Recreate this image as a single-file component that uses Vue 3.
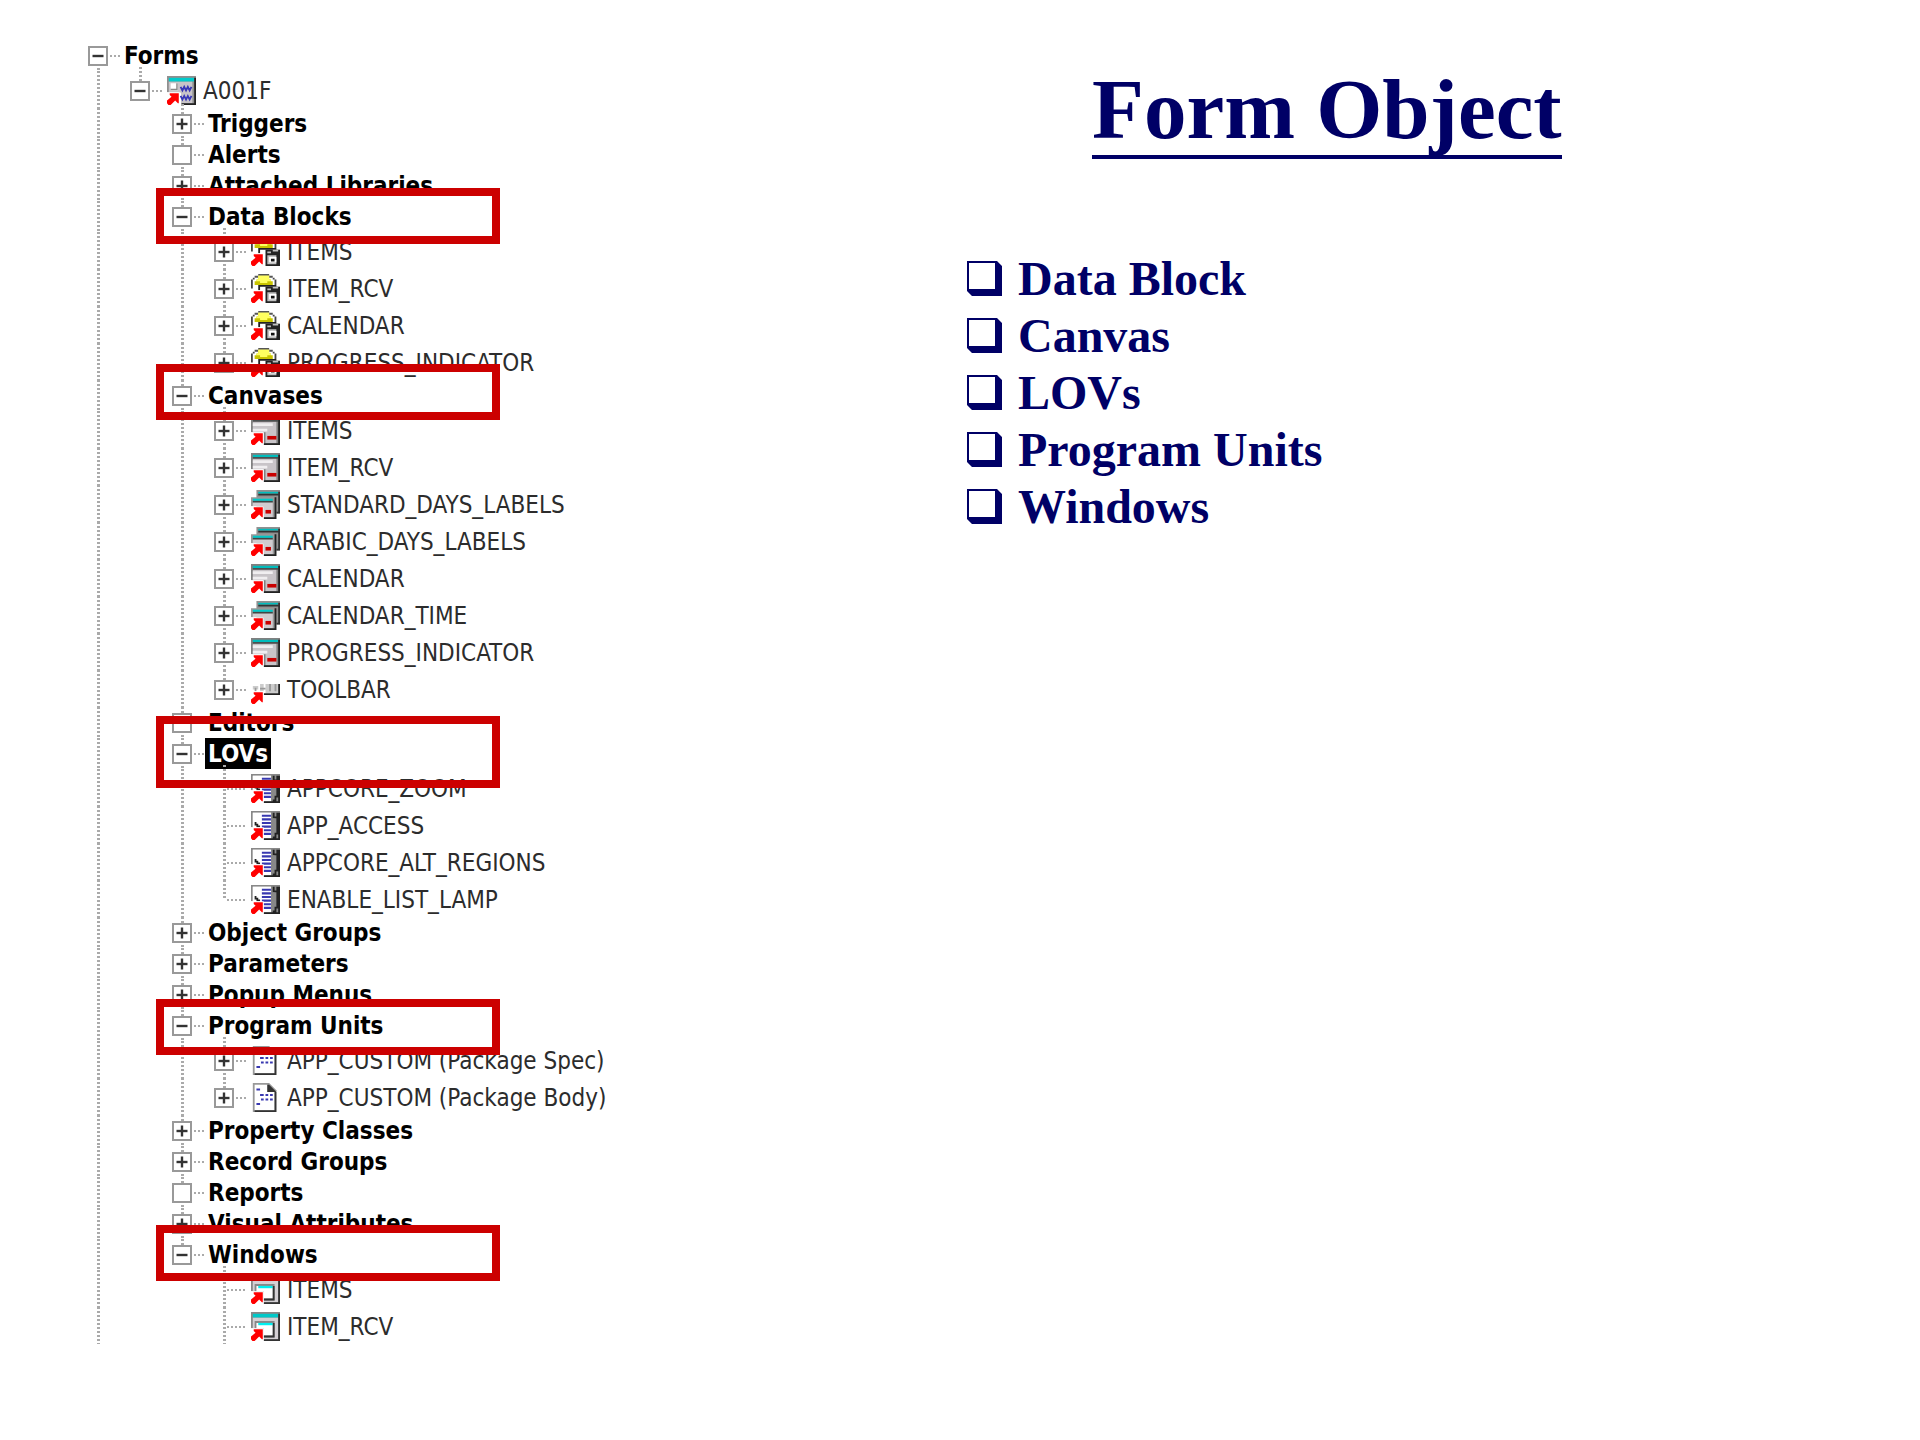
<template>
  <main class="slide">
    <section class="navigator">
      <ul class="tree">
        <li v-for="(row, i) in rows" :key="i" class="row" :class="row.icon ? 'object' : 'group'">
          <span
            v-for="(line, g) in row.guides"
            :key="g"
            class="guide"
            :class="{ line }"
          ></span>
          <span class="branch" :class="row.link">
            <button
              v-if="row.sign === '+' || row.sign === '-'"
              class="toggle"
              type="button"
              :aria-label="row.name"
              :aria-expanded="row.sign === '-'"
            >
              <svg viewBox="0 0 16 16">
                <path d="M2.500 6.800h11v2.400h-11z" />
                <path v-if="row.sign === '+'" d="M6.800 2.500h2.400v11H6.800z" />
              </svg>
            </button>
            <span v-else-if="row.sign === 'o'" class="toggle"></span>
            <span class="dots" :class="{ long: !row.sign }"></span>
          </span>
          <svg v-if="row.icon" class="icon" viewBox="0 0 16 16">
            <template v-if="row.icon === 'form'">
              <path fill="#909090" d="M0 0h16v16H8V9H0z" />
              <path fill="#c8c4c8" d="M1 3h13v12H8V9H1z" />
              <path fill="#00cccc" d="M1 1h14v2H1z" />
              <path fill="#fff" d="M2 4h4v4H2z" />
              <path fill="none" stroke="#888" stroke-width=".8" d="M2 7.500h3.500V4" />
              <path fill="none" stroke="#3838b8" d="M7.500 6l1 2 1-2 1 2 1-2 1 2 1-2M7.500 11l1 2 1-2 1 2 1-2 1 2 1-2" />
              <path fill="#222" d="M15 1h1v15H8v-1h7z" />
            </template>
            <template v-else-if="row.icon === 'block'">
              <path fill="#555" d="M4 0h6v1H4zM2 1h2v1H2zM10 1h2v1h-2z" />
              <path fill="#444" d="M0 3h1v5H0zM1 2h1v1H1zM12 2h1v1h-1zM13 3h1v3h-1z" />
              <path fill="#c8c400" d="M2 4h1V3h1V1h6v2h1v1h1v2H2z" />
              <path fill="#ffff60" d="M4 1h6v2h1v1H9v1H5V4H3V3h1z" />
              <path fill="#222" d="M4 6h10v1H5v2H4z" />
              <path fill="#222" d="M8 7h8v9H8z" />
              <path fill="#c0c0c0" d="M9 8h2v1H9zM12 7h3v1h-3zM9 10h5v5H9z" />
              <path fill="#fff" d="M10 11h4v3h-4z" />
              <path fill="#111" d="M11 12h2v1.500h-2z" />
            </template>
            <template v-else-if="row.icon === 'canvas'">
              <path fill="#808080" d="M0 0h16v16H7V9H0z" />
              <path fill="#c8c4c8" d="M1 3h13v12H8V9H1z" />
              <path fill="#00bcbc" d="M1 1h14v1.300H1z" />
              <path fill="#444" d="M1 2.300h14v.8H1z" />
              <path fill="#f0eef0" d="M1 4h11v1.500H1zM1 7h8v1.500H1z" />
              <path fill="#c80000" d="M9 11h5v2H9z" />
              <path fill="#222" d="M15 1h1v15H7v-1h8z" />
            </template>
            <template v-else-if="row.icon === 'stack'">
              <path fill="#909090" d="M3 0h13v13H3z" />
              <path fill="#00bcbc" d="M4 1h11v1H4z" />
              <path fill="#333" d="M4 2h11v1H4zM15 1h1v12h-2v-1h1z" />
              <path fill="#999" d="M0 4h14v12H7V9H0z" />
              <path fill="#d0ccd0" d="M1 7h11v8H7V9H1z" />
              <path fill="#00c8c8" d="M1 4.800h11V6H1z" />
              <path fill="#444" d="M1 6h11v.8H1z" />
              <path fill="#c80000" d="M8 11h3v2H8z" />
              <path fill="#222" d="M13 4h1v12H7v-1h6z" />
            </template>
            <template v-else-if="row.icon === 'toolbar'">
              <path fill="#ccc" d="M1 6h3v2H1zM5 5h2v4H5zM8 5h7v5H8z" />
              <path fill="#999" d="M2 7h1v2H2zM5 7h3v1H5zM10 5h1v4h-1zM13 5h1v4h-1z" />
              <path fill="#222" d="M15 5h1v6H7v-1h8z" />
            </template>
            <template v-else-if="row.icon === 'lov'">
              <path fill="#888" d="M0 0h16v16H7v-1h4V1H1v8H0z" />
              <path fill="#fff" d="M1 1h10v14H7V9H1z" />
              <path fill="#3838b0" d="M6 2h5v1.200H6zM6 4h5v1.200H6zM6 6h5v1.200H6zM6 8h5v1.200H6zM7 10h4v1.200H7zM7 12h4v1.200H7z" />
              <path fill="#222" d="M2 6h1v1h1v1h1v1H3V8H2zM12 1h1v2h1V1h2v15H7v-1h8v-2h-1v2h-2v-1h1V4h-1z" />
              <path fill="#888" d="M12 4h2v8h-2z" />
            </template>
            <template v-else-if="row.icon === 'unit'">
              <path fill="#999" d="M1 0h9l4 4v12H1z" />
              <path fill="#fff" d="M2 1h7v4h4v10H2z" />
              <path fill="#333" d="M9 1h1l4 4v11H2v-1h11V5H9z" />
              <path fill="#3838b0" d="M3 3h2v1.200H3zM5 6h2v1.200H5zM8 6h1.500v1.200H8zM10.500 6H12v1.200h-1.500zM5.500 8.500H7v1.200H5.500zM8 8.500h1.500v1.200H8zM10.500 8.500H12v1.200h-1.500zM3 11h2v1.200H3z" />
            </template>
            <template v-else>
              <path fill="#888" d="M0 0h16v16H7V9H0z" />
              <path fill="#d4d0d4" d="M1 3h14v12H7V9H1z" />
              <path fill="#00c8c8" d="M1 1h14v2H1z" />
              <path fill="#888" d="M2 5h11v9H7V9H2z" />
              <path fill="#fff" d="M3 6h9v7H7V9H3z" />
              <path fill="#00f0f0" d="M4 6h8v1.300H4z" />
              <path fill="#333" d="M12 6h1v8H7v-1h5zM15 1h1v15H7v-1h8z" />
            </template>
            <path v-if="row.icon !== 'unit'" fill="#fff" d="M0 9h7v7H0z" />
            <path v-if="row.icon !== 'unit'" fill="#f00" d="M1.500 9.500h5V15H6l-1.500-1.500L3 15l-1 1H.8L0 15v-1.500l2.500-2-1-1z" />
          </svg>
          <span class="label" :class="{ selected: row.selected }">{{ row.name }}</span>
          <span v-if="row.sign === '-'" class="stem"></span>
        </li>
      </ul>
      <div
        v-for="mark in marks"
        :key="mark.top"
        class="mark"
        :style="{ top: mark.top + 'px', height: mark.height + 'px' }"
      ></div>
    </section>

    <section class="summary">
      <h1>Form Object</h1>
      <ul class="topics">
        <li v-for="topic in topics" :key="topic">
          <svg class="bullet" viewBox="0 0 35 35">
            <path fill-rule="evenodd" d="M0 0h30l5 5v30H5l-5-5zM2 2v26h26V2z" />
          </svg>
          {{ topic }}
        </li>
      </ul>
    </section>
  </main>
</template>

<script setup>
const topics = ['Data Block', 'Canvas', 'LOVs', 'Program Units', 'Windows'];

// boxes drawn over the tree
const marks = [
  { top: 188, height: 56 },
  { top: 364, height: 56 },
  { top: 716, height: 72 },
  { top: 999, height: 56 },
  { top: 1225, height: 56 },
];

// sign: '+' collapsed, '-' expanded, 'o' empty group
const groups = [
  { name: 'Triggers', sign: '+' },
  { name: 'Alerts', sign: 'o' },
  { name: 'Attached Libraries', sign: '+' },
  {
    name: 'Data Blocks',
    sign: '-',
    childSign: '+',
    children: [
      ['ITEMS', 'block'],
      ['ITEM_RCV', 'block'],
      ['CALENDAR', 'block'],
      ['PROGRESS_INDICATOR', 'block'],
    ],
  },
  {
    name: 'Canvases',
    sign: '-',
    childSign: '+',
    children: [
      ['ITEMS', 'canvas'],
      ['ITEM_RCV', 'canvas'],
      ['STANDARD_DAYS_LABELS', 'stack'],
      ['ARABIC_DAYS_LABELS', 'stack'],
      ['CALENDAR', 'canvas'],
      ['CALENDAR_TIME', 'stack'],
      ['PROGRESS_INDICATOR', 'canvas'],
      ['TOOLBAR', 'toolbar'],
    ],
  },
  { name: 'Editors', sign: 'o' },
  {
    name: 'LOVs',
    sign: '-',
    selected: true,
    children: [
      ['APPCORE_ZOOM', 'lov'],
      ['APP_ACCESS', 'lov'],
      ['APPCORE_ALT_REGIONS', 'lov'],
      ['ENABLE_LIST_LAMP', 'lov'],
    ],
  },
  { name: 'Object Groups', sign: '+' },
  { name: 'Parameters', sign: '+' },
  { name: 'Popup Menus', sign: '+' },
  {
    name: 'Program Units',
    sign: '-',
    childSign: '+',
    children: [
      ['APP_CUSTOM (Package Spec)', 'unit'],
      ['APP_CUSTOM (Package Body)', 'unit'],
    ],
  },
  { name: 'Property Classes', sign: '+' },
  { name: 'Record Groups', sign: '+' },
  { name: 'Reports', sign: 'o' },
  { name: 'Visual Attributes', sign: '+' },
  {
    name: 'Windows',
    sign: '-',
    more: true,
    children: [
      ['ITEMS', 'window'],
      ['ITEM_RCV', 'window'],
    ],
  },
];

const rows = [
  { name: 'Forms', sign: '-', guides: [], link: 'first' },
  { name: 'A001F', sign: '-', icon: 'form', guides: [true], link: 'last' },
];

groups.forEach((group, g) => {
  const lastGroup = g === groups.length - 1;
  rows.push({
    name: group.name,
    sign: group.sign,
    selected: group.selected,
    guides: [true, false],
    link: lastGroup ? 'last' : 'through',
  });
  const children = group.children || [];
  children.forEach(([name, icon], c) => {
    const last = c === children.length - 1 && !group.more;
    rows.push({
      name,
      icon,
      sign: group.childSign,
      guides: [true, false, !lastGroup],
      link: last ? 'last' : 'through',
    });
  });
});
</script>

<style>
body {
  margin: 0;
  background: #fff;
}
</style>

<style scoped>
.slide {
  display: flex;
  align-items: flex-start;
}

ul {
  list-style: none;
  margin: 0;
  padding: 0;
}

.navigator {
  position: relative;
  box-sizing: border-box;
  width: 50%;
  padding: 40px 0 40px 88px;
  font-family: "DejaVu Sans Condensed", "DejaVu Sans", sans-serif;
  font-size: 24px;
}

.row {
  position: relative;
  display: flex;
  white-space: nowrap;
}

.group {
  height: 31px;
  line-height: 32px;
  font-weight: bold;
  color: #000;
}

.object {
  height: 37px;
  line-height: 37px;
  color: #2c2c2c;
}

.guide {
  flex: none;
  width: 42px;
}

.line,
.branch {
  background-image: repeating-linear-gradient(#aaa 0 2px, transparent 2px 4px);
  background-repeat: no-repeat;
  background-position: 9px 0;
  background-size: 3px 100%;
}

.branch {
  display: flex;
  align-items: center;
  flex: none;
  width: 33px;
}

.branch.last {
  background-size: 3px 50%;
}

.branch.first {
  background-position: 9px 100%;
  background-size: 3px 50%;
}

.object .branch,
.object .icon {
  padding-top: 2px;
}

.toggle {
  display: block;
  box-sizing: border-box;
  width: 20px;
  height: 20px;
  padding: 0;
  border: 2px solid #999;
  border-radius: 0;
  background: #fff;
}

.toggle svg {
  display: block;
  fill: #333;
}

.dots {
  width: 11px;
  height: 2px;
  margin-left: 2px;
  background: repeating-linear-gradient(90deg, #aaa 0 2px, transparent 2px 4px);
}

.dots.long {
  width: 20px;
  margin-left: 13px;
}

.icon {
  flex: none;
  align-self: center;
  width: 29px;
  height: 29px;
  margin-left: 4px;
}

.label {
  padding: 0 3px;
}

.object .label {
  padding: 2px 7px 0;
}

.selected {
  background: #000;
  color: #fff;
}

/* start of the line that leads down to the children */
.stem {
  position: absolute;
  bottom: 0;
  left: 51px;
  width: 3px;
  height: 4px;
  background: repeating-linear-gradient(#aaa 0 2px, transparent 2px 4px);
}

.row:nth-child(2) .stem {
  left: 93px;
}

.guide ~ .guide ~ .stem {
  left: 135px;
}

.mark {
  position: absolute;
  left: 156px;
  box-sizing: border-box;
  width: 344px;
  border: 8px solid #c00;
}

.summary {
  flex: 1;
  padding: 64px 0 0 7px;
  font-family: "Liberation Serif", "Times New Roman", serif;
  font-weight: bold;
  color: #006;
}

h1 {
  width: fit-content;
  margin: 0 0 91px 125px;
  border-bottom: 4px solid #006;
  font-size: 85px;
  line-height: 91px;
}

.topics {
  font-size: 48px;
  line-height: 57px;
}

.topics li {
  display: flex;
  align-items: center;
  gap: 16px;
}

.bullet {
  width: 35px;
  height: 35px;
  fill: #006;
}
</style>
